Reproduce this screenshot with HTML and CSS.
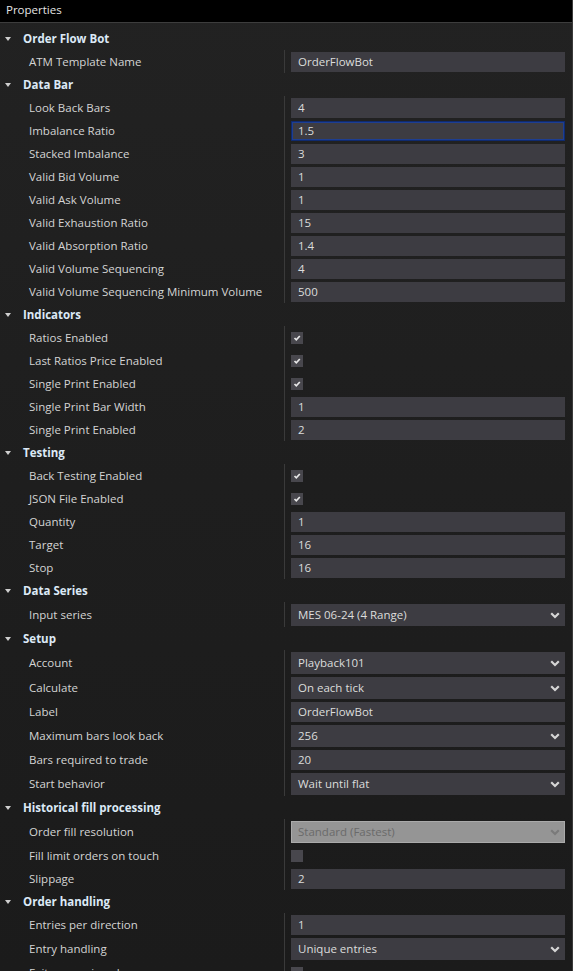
FILE: index.html
```html
<!DOCTYPE html>
<html>
<head>
<meta charset="utf-8">
<link rel="stylesheet" href="styles.css">
</head>
<body>
<div class="panel">
  <div class="titlebar">Properties</div>
  <div class="grid">
    <div class="cat"><span class="tri"></span>Order Flow Bot</div>
    <div class="row"><div class="label">ATM Template Name</div><div class="value"><div class="box">OrderFlowBot</div></div></div>

    <div class="cat"><span class="tri"></span>Data Bar</div>
    <div class="row"><div class="label">Look Back Bars</div><div class="value"><div class="box">4</div></div></div>
    <div class="row"><div class="label">Imbalance Ratio</div><div class="value"><div class="box focus">1.5</div></div></div>
    <div class="row"><div class="label">Stacked Imbalance</div><div class="value"><div class="box">3</div></div></div>
    <div class="row"><div class="label">Valid Bid Volume</div><div class="value"><div class="box">1</div></div></div>
    <div class="row"><div class="label">Valid Ask Volume</div><div class="value"><div class="box">1</div></div></div>
    <div class="row"><div class="label">Valid Exhaustion Ratio</div><div class="value"><div class="box">15</div></div></div>
    <div class="row"><div class="label">Valid Absorption Ratio</div><div class="value"><div class="box">1.4</div></div></div>
    <div class="row"><div class="label">Valid Volume Sequencing</div><div class="value"><div class="box">4</div></div></div>
    <div class="row"><div class="label">Valid Volume Sequencing Minimum Volume</div><div class="value"><div class="box">500</div></div></div>

    <div class="cat"><span class="tri"></span>Indicators</div>
    <div class="row"><div class="label">Ratios Enabled</div><div class="value"><span class="chk on"><svg viewBox="0 0 12 12" width="12" height="12"><polyline points="3.5,6 5.3,7.8 8.8,4" fill="none" stroke="#e8e8e8" stroke-width="1.7"/></svg></span></div></div>
    <div class="row"><div class="label">Last Ratios Price Enabled</div><div class="value"><span class="chk on"><svg viewBox="0 0 12 12" width="12" height="12"><polyline points="3.5,6 5.3,7.8 8.8,4" fill="none" stroke="#e8e8e8" stroke-width="1.7"/></svg></span></div></div>
    <div class="row"><div class="label">Single Print Enabled</div><div class="value"><span class="chk on"><svg viewBox="0 0 12 12" width="12" height="12"><polyline points="3.5,6 5.3,7.8 8.8,4" fill="none" stroke="#e8e8e8" stroke-width="1.7"/></svg></span></div></div>
    <div class="row"><div class="label">Single Print Bar Width</div><div class="value"><div class="box">1</div></div></div>
    <div class="row"><div class="label">Single Print Enabled</div><div class="value"><div class="box">2</div></div></div>

    <div class="cat"><span class="tri"></span>Testing</div>
    <div class="row"><div class="label">Back Testing Enabled</div><div class="value"><span class="chk on"><svg viewBox="0 0 12 12" width="12" height="12"><polyline points="3.5,6 5.3,7.8 8.8,4" fill="none" stroke="#e8e8e8" stroke-width="1.7"/></svg></span></div></div>
    <div class="row"><div class="label">JSON File Enabled</div><div class="value"><span class="chk on"><svg viewBox="0 0 12 12" width="12" height="12"><polyline points="3.5,6 5.3,7.8 8.8,4" fill="none" stroke="#e8e8e8" stroke-width="1.7"/></svg></span></div></div>
    <div class="row"><div class="label">Quantity</div><div class="value"><div class="box">1</div></div></div>
    <div class="row"><div class="label">Target</div><div class="value"><div class="box">16</div></div></div>
    <div class="row"><div class="label">Stop</div><div class="value"><div class="box">16</div></div></div>

    <div class="cat"><span class="tri"></span>Data Series</div>
    <div class="row drop"><div class="label">Input series</div><div class="value"><div class="box select"><span>MES 06-24 (4 Range)</span><svg class="chev" viewBox="0 0 10 7" width="10" height="7"><polyline points="1.2,1.3 5,5 8.8,1.3" fill="none" stroke="#d6d6d6" stroke-width="2.2"/></svg></div></div></div>

    <div class="cat"><span class="tri"></span>Setup</div>
    <div class="row drop"><div class="label">Account</div><div class="value"><div class="box select"><span>Playback101</span><svg class="chev" viewBox="0 0 10 7" width="10" height="7"><polyline points="1.2,1.3 5,5 8.8,1.3" fill="none" stroke="#d6d6d6" stroke-width="2.2"/></svg></div></div></div>
    <div class="row drop"><div class="label">Calculate</div><div class="value"><div class="box select"><span>On each tick</span><svg class="chev" viewBox="0 0 10 7" width="10" height="7"><polyline points="1.2,1.3 5,5 8.8,1.3" fill="none" stroke="#d6d6d6" stroke-width="2.2"/></svg></div></div></div>
    <div class="row"><div class="label">Label</div><div class="value"><div class="box">OrderFlowBot</div></div></div>
    <div class="row drop"><div class="label">Maximum bars look back</div><div class="value"><div class="box select"><span>256</span><svg class="chev" viewBox="0 0 10 7" width="10" height="7"><polyline points="1.2,1.3 5,5 8.8,1.3" fill="none" stroke="#d6d6d6" stroke-width="2.2"/></svg></div></div></div>
    <div class="row"><div class="label">Bars required to trade</div><div class="value"><div class="box">20</div></div></div>
    <div class="row drop"><div class="label">Start behavior</div><div class="value"><div class="box select"><span>Wait until flat</span><svg class="chev" viewBox="0 0 10 7" width="10" height="7"><polyline points="1.2,1.3 5,5 8.8,1.3" fill="none" stroke="#d6d6d6" stroke-width="2.2"/></svg></div></div></div>

    <div class="cat"><span class="tri"></span>Historical fill processing</div>
    <div class="row drop"><div class="label">Order fill resolution</div><div class="value"><div class="box select disabled"><span>Standard (Fastest)</span><svg class="chev" viewBox="0 0 10 7" width="10" height="7"><polyline points="1.2,1.3 5,5 8.8,1.3" fill="none" stroke="#7a7a7a" stroke-width="2.2"/></svg></div></div></div>
    <div class="row"><div class="label">Fill limit orders on touch</div><div class="value"><span class="chk"></span></div></div>
    <div class="row"><div class="label">Slippage</div><div class="value"><div class="box">2</div></div></div>

    <div class="cat"><span class="tri"></span>Order handling</div>
    <div class="row"><div class="label">Entries per direction</div><div class="value"><div class="box">1</div></div></div>
    <div class="row drop"><div class="label">Entry handling</div><div class="value"><div class="box select"><span>Unique entries</span><svg class="chev" viewBox="0 0 10 7" width="10" height="7"><polyline points="1.2,1.3 5,5 8.8,1.3" fill="none" stroke="#d6d6d6" stroke-width="2.2"/></svg></div></div></div>
    <div class="row"><div class="label">Exit on session close</div><div class="value"><span class="chk"></span></div></div>
  </div>
</div>
</body>
</html>
```

FILE: styles.css
```css
html, body {
  margin: 0;
  padding: 0;
  background: #1d1d1d;
}
body {
  width: 573px;
  height: 971px;
  overflow: hidden;
  font-family: "Open Sans", "Noto Sans", sans-serif;
  font-size: 11.5px;
}
.panel {
  width: 573px;
  height: 971px;
  box-sizing: border-box;
  border-right: 1px solid #3a3a3a;
  background: linear-gradient(180deg, #222222 0%, #1e1e1e 50%, #1b1b1b 100%);
  overflow: hidden;
}
.titlebar {
  height: 22px;
  line-height: 19px;
  background: #000;
  color: #e4e4e4;
  padding-left: 6px;
  border-bottom: 1px solid #3d3d3d;
}
.grid {
  padding-top: 4px;
}
.cat {
  height: 23px;
  display: flex;
  align-items: center;
  font-weight: bold;
  color: #dce9f6;
  padding-left: 5px;
}
.tri {
  width: 0;
  height: 0;
  border-left: 3.5px solid transparent;
  border-right: 3.5px solid transparent;
  border-top: 4px solid #cfcfcf;
  margin-right: 12px;
  margin-top: 1px;
}
.row {
  height: 23px;
  display: flex;
}
.row.drop {
  height: 25px;
}
.label {
  width: 284px;
  box-sizing: border-box;
  padding-left: 29px;
  color: #d4d4d4;
  display: flex;
  align-items: center;
  white-space: nowrap;
}
.value {
  flex: 1;
  border-left: 1px solid #3a3a3a;
  padding: 2px 7px 1px 6px;
  display: flex;
  align-items: center;
}
.box {
  flex: 1;
  height: 20px;
  box-sizing: border-box;
  background: #3d3c42;
  color: #dcdcdc;
  padding-left: 7px;
  line-height: 20px;
  align-self: flex-start;
}
.box.focus {
  border: 1px solid #0f2a6e;
  box-shadow: inset 0 0 0 1px #1d3e92;
  padding-left: 6px;
  line-height: 18px;
}
.box.select {
  height: 22px;
  line-height: 22px;
  display: flex;
  justify-content: space-between;
  align-items: center;
  padding-right: 5px;
}
.box.select span {
  line-height: 22px;
}
.box.disabled {
  background: #959595;
  border: 1px solid #aaaaaa;
  color: #6a6a6a;
  padding-left: 6px;
  padding-right: 4px;
}
.chev {
  display: block;
}
.chk {
  width: 12px;
  height: 12px;
  background: #48474d;
  display: block;
}
.chk svg {
  display: block;
}
```
